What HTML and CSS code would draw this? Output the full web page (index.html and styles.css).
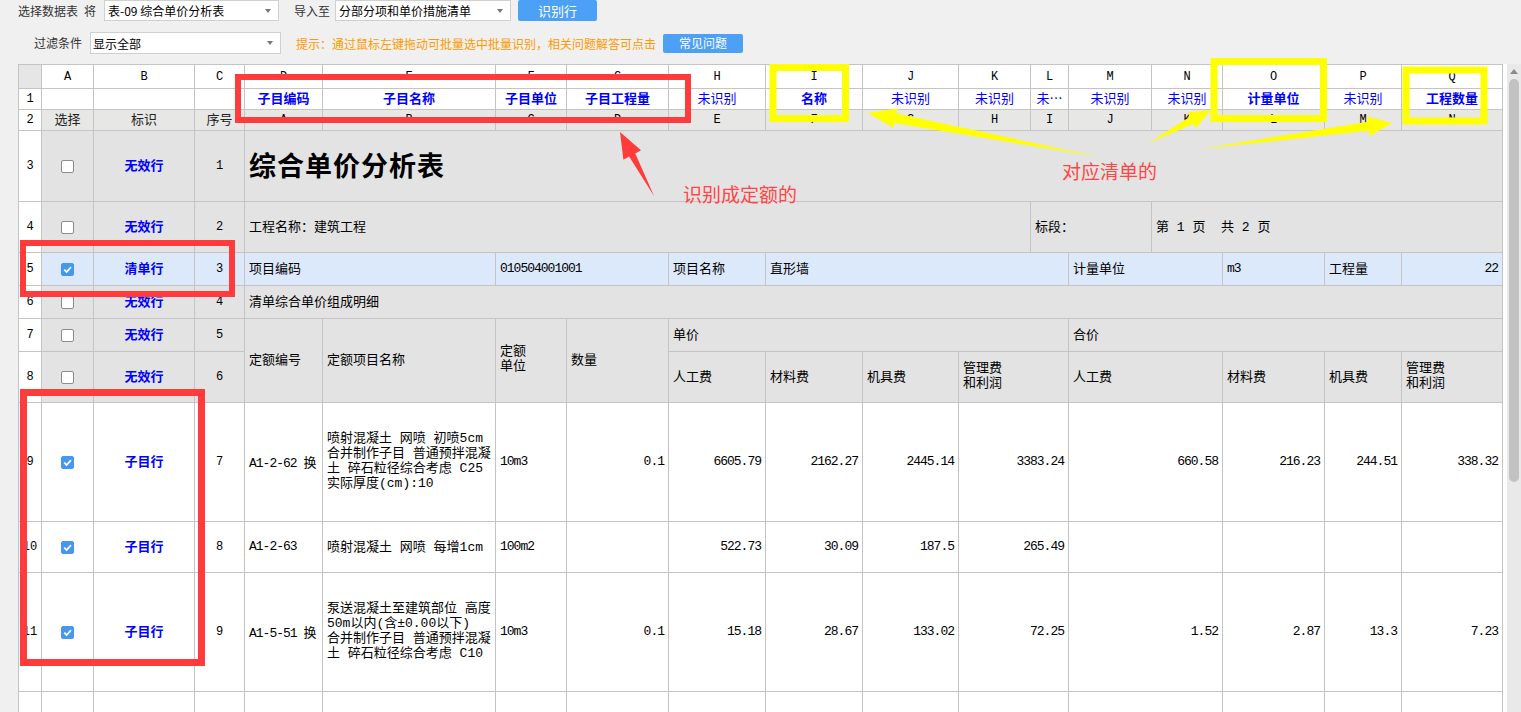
FILE: index.html
```html
<!DOCTYPE html>
<html lang="zh-CN">
<head>
<meta charset="utf-8">
<title>识别行</title>
<link rel="stylesheet" href="styles.css">
</head>
<body>
<div class="bar bar1">
  <span class="lbl">选择数据表</span>
  <span class="lbl jiang">将</span>
  <div class="select sel1"><span>表-09 综合单价分析表</span><svg class="caret" width="6" height="4" viewBox="0 0 6 4"><path d="M0 0H6L3 4Z"/></svg></div>
  <span class="lbl daoru">导入至</span>
  <div class="select sel2"><span>分部分项和单价措施清单</span><svg class="caret" width="6" height="4" viewBox="0 0 6 4"><path d="M0 0H6L3 4Z"/></svg></div>
  <button class="btn btn1">识别行</button>
</div>
<div class="bar bar2">
  <span class="lbl">过滤条件</span>
  <div class="select sel3"><span>显示全部</span><svg class="caret" width="6" height="4" viewBox="0 0 6 4"><path d="M0 0H6L3 4Z"/></svg></div>
  <span class="hint">提示：通过鼠标左键拖动可批量选中批量识别，相关问题解答可点击</span>
  <button class="btn btn2">常见问题</button>
</div>

<div class="gridwrap">
  <div class="sheet">
    <!-- column letters -->
    <div class="c corner"></div>
    <div class="c ctr col">A</div><div class="c ctr col">B</div><div class="c ctr col">C</div><div class="c ctr col">D</div><div class="c ctr col">E</div><div class="c ctr col">F</div><div class="c ctr col">G</div><div class="c ctr col">H</div><div class="c ctr col">I</div><div class="c ctr col">J</div><div class="c ctr col">K</div><div class="c ctr col">L</div><div class="c ctr col">M</div><div class="c ctr col">N</div><div class="c ctr col">O</div><div class="c ctr col">P</div><div class="c ctr col">Q</div>

    <!-- row 1 -->
    <div class="c ctr col">1</div><div class="c"></div><div class="c"></div><div class="c"></div>
    <div class="c ctr lab">子目编码</div><div class="c ctr lab">子目名称</div><div class="c ctr lab">子目单位</div><div class="c ctr lab">子目工程量</div>
    <div class="c ctr un">未识别</div><div class="c ctr lab">名称</div><div class="c ctr un">未识别</div><div class="c ctr un">未识别</div><div class="c ctr un">未…</div><div class="c ctr un">未识别</div><div class="c ctr un">未识别</div><div class="c ctr lab">计量单位</div><div class="c ctr un">未识别</div><div class="c ctr lab">工程数量</div>

    <!-- row 2 -->
    <div class="c ctr col">2</div><div class="c ctr h cn">选择</div><div class="c ctr h cn">标识</div><div class="c ctr h cn">序号</div>
    <div class="c ctr h col">A</div><div class="c ctr h col">B</div><div class="c ctr h col">C</div><div class="c ctr h col">D</div><div class="c ctr h col">E</div><div class="c ctr h col">F</div><div class="c ctr h col">G</div><div class="c ctr h col">H</div><div class="c ctr h col">I</div><div class="c ctr h col">J</div><div class="c ctr h col">K</div><div class="c ctr h col">L</div><div class="c ctr h col">M</div><div class="c ctr h col">N</div>

    <!-- row 3 -->
    <div class="c ctr col">3</div><div class="c ctr g box"><span class="cb"></span></div><div class="c ctr g lab">无效行</div><div class="c ctr g col">1</div>
    <div class="c g s14 title">综合单价分析表</div>

    <!-- row 4 -->
    <div class="c ctr col">4</div><div class="c ctr g box"><span class="cb"></span></div><div class="c ctr g lab">无效行</div><div class="c ctr g col">2</div>
    <div class="c g s8">工程名称：建筑工程</div><div class="c g s2">标段：</div><div class="c g s4">第 1 页&nbsp; 共 2 页</div>

    <!-- row 5 -->
    <div class="c ctr col">5</div><div class="c ctr sel box"><span class="cb on"><svg width="11" height="11" viewBox="0 0 11 11"><path d="M2.2 5.6L4.6 8L9 3.2" fill="none" stroke="#fff" stroke-width="1.8"/></svg></span></div><div class="c ctr sel lab">清单行</div><div class="c ctr sel col">3</div>
    <div class="c sel s2">项目编码</div><div class="c sel s2 num">010504001001</div><div class="c sel">项目名称</div><div class="c sel s4">直形墙</div><div class="c sel s2">计量单位</div><div class="c sel num">m3</div><div class="c sel">工程量</div><div class="c sel rt num">22</div>

    <!-- row 6 -->
    <div class="c ctr col">6</div><div class="c ctr g box"><span class="cb"></span></div><div class="c ctr g lab">无效行</div><div class="c ctr g col">4</div>
    <div class="c g s14">清单综合单价组成明细</div>

    <!-- row 7 -->
    <div class="c ctr col">7</div><div class="c ctr g box"><span class="cb"></span></div><div class="c ctr g lab">无效行</div><div class="c ctr g col">5</div>
    <div class="c g r2">定额编号</div><div class="c g r2">定额项目名称</div><div class="c g r2 ml"><div>定额<br>单位</div></div><div class="c g r2">数量</div>
    <div class="c g s5">单价</div><div class="c g s5">合价</div>

    <!-- row 8 -->
    <div class="c ctr col">8</div><div class="c ctr g box"><span class="cb"></span></div><div class="c ctr g lab">无效行</div><div class="c ctr g col">6</div>
    <div class="c g">人工费</div><div class="c g">材料费</div><div class="c g">机具费</div><div class="c g s2 ml"><div>管理费<br>和利润</div></div>
    <div class="c g s2">人工费</div><div class="c g">材料费</div><div class="c g">机具费</div><div class="c g ml"><div>管理费<br>和利润</div></div>

    <!-- row 9 -->
    <div class="c ctr col">9</div><div class="c ctr box"><span class="cb on"><svg width="11" height="11" viewBox="0 0 11 11"><path d="M2.2 5.6L4.6 8L9 3.2" fill="none" stroke="#fff" stroke-width="1.8"/></svg></span></div><div class="c ctr lab">子目行</div><div class="c ctr col">7</div>
    <div class="c num">A1-2-62 换</div>
    <div class="c ml"><div>喷射混凝土 网喷 初喷5cm<br>合并制作子目 普通预拌混凝<br>土 碎石粒径综合考虑 C25<br>实际厚度(cm):10</div></div>
    <div class="c num">10m3</div><div class="c rt num">0.1</div>
    <div class="c rt num">6605.79</div><div class="c rt num">2162.27</div><div class="c rt num">2445.14</div><div class="c rt num s2">3383.24</div>
    <div class="c rt num s2">660.58</div><div class="c rt num">216.23</div><div class="c rt num">244.51</div><div class="c rt num">338.32</div>

    <!-- row 10 -->
    <div class="c ctr col">10</div><div class="c ctr box"><span class="cb on"><svg width="11" height="11" viewBox="0 0 11 11"><path d="M2.2 5.6L4.6 8L9 3.2" fill="none" stroke="#fff" stroke-width="1.8"/></svg></span></div><div class="c ctr lab">子目行</div><div class="c ctr col">8</div>
    <div class="c num">A1-2-63</div>
    <div class="c">喷射混凝土 网喷 每增1cm</div>
    <div class="c num">100m2</div><div class="c"></div>
    <div class="c rt num">522.73</div><div class="c rt num">30.09</div><div class="c rt num">187.5</div><div class="c rt num s2">265.49</div>
    <div class="c s2"></div><div class="c"></div><div class="c"></div><div class="c"></div>

    <!-- row 11 -->
    <div class="c ctr col">11</div><div class="c ctr box"><span class="cb on"><svg width="11" height="11" viewBox="0 0 11 11"><path d="M2.2 5.6L4.6 8L9 3.2" fill="none" stroke="#fff" stroke-width="1.8"/></svg></span></div><div class="c ctr lab">子目行</div><div class="c ctr col">9</div>
    <div class="c num">A1-5-51 换</div>
    <div class="c ml"><div>泵送混凝土至建筑部位 高度<br>50m以内(含±0.00以下)<br>合并制作子目 普通预拌混凝<br>土 碎石粒径综合考虑 C10</div></div>
    <div class="c num">10m3</div><div class="c rt num">0.1</div>
    <div class="c rt num">15.18</div><div class="c rt num">28.67</div><div class="c rt num">133.02</div><div class="c rt num s2">72.25</div>
    <div class="c rt num s2">1.52</div><div class="c rt num">2.87</div><div class="c rt num">13.3</div><div class="c rt num">7.23</div>

    <!-- row 12 (mostly below the fold) -->
    <div class="c ctr col"></div><div class="c"></div><div class="c"></div><div class="c"></div>
    <div class="c"></div><div class="c"></div><div class="c"></div><div class="c"></div>
    <div class="c"></div><div class="c"></div><div class="c"></div><div class="c s2"></div>
    <div class="c s2"></div><div class="c"></div><div class="c"></div><div class="c"></div>
  </div>
  <div class="vscroll">
    <svg class="uparrow" width="8" height="5" viewBox="0 0 8 5"><path d="M0 5L4 0L8 5Z"/></svg>
    <div class="thumb"></div>
  </div>
</div>

<svg class="overlay" width="1521" height="712" viewBox="0 0 1521 712">
  <g fill="none" stroke="#ff3b3b" stroke-width="6">
    <rect x="238" y="77" width="450" height="43"/>
    <rect x="23" y="243" width="209" height="51"/>
    <rect x="23.5" y="392.5" width="178" height="270" stroke-width="7"/>
  </g>
  <g fill="none" stroke="#ffff00" stroke-width="7">
    <rect x="773" y="67.5" width="72.5" height="51"/>
    <rect x="1214" y="61.5" width="109.5" height="57"/>
    <rect x="1406" y="70" width="78" height="51"/>
  </g>
  <g fill="#ffff00">
    <polygon points="868,113 897.4,108.4 896.6,113.5 1099,157 894.4,122.9 893.6,128"/>
    <polygon points="1211,110 1187.4,112.4 1189.8,116.8 1149,143 1193.4,123.8 1195.8,128.2"/>
    <polygon points="1392,123 1366.9,116.3 1367.6,121.7 1201,149 1368.8,130.7 1369.6,136.1"/>
  </g>
  <polygon fill="#ff3b3b" points="620,132 641,150.3 635.3,153.4 654,196 629.1,156.6 623.4,159.7"/>
</svg>
<div class="note n1">识别成定额的</div>
<div class="note n2">对应清单的</div>
</body>
</html>
```

FILE: styles.css
```css
* { box-sizing: border-box; }
html, body { margin: 0; }
body {
  width: 1521px;
  height: 712px;
  overflow: hidden;
  position: relative;
  background: #f0f0f0;
  font-family: "Noto Sans CJK SC", "Liberation Sans", sans-serif;
  font-size: 12px;
  color: #333;
}

/* toolbar */
.bar { display: flex; align-items: center; }
.bar1 { height: 21px; padding-left: 18px; }
.bar2 { height: 22px; margin-top: 11px; padding-left: 34px; }
.lbl { white-space: nowrap; line-height: 1; }
.jiang { margin-left: 6px; }
.daoru { margin-left: 15px; }
.select {
  display: flex;
  align-items: center;
  justify-content: space-between;
  height: 100%;
  background: #fff;
  border: 1px solid #d0d0d0;
  padding: 0 7px 0 3px;
  color: #000;
  font-size: 12px;
  white-space: nowrap;
}
.caret { fill: #777; }
.sel1 { margin-left: 8px; width: 175px; }
.sel2 { margin-left: 5px; width: 176px; }
.sel3 { margin-left: 8px; width: 191px; padding-left: 2px; }
.btn {
  border: none;
  border-radius: 2px;
  background: #4ca0f5;
  color: #fff;
  font-family: "Noto Sans CJK SC", sans-serif;
  font-size: 13px;
  padding: 0;
  line-height: 1;
}
.btn1 { margin-left: 7px; width: 79px; height: 21px; }
.btn2 { margin-left: 7px; width: 80px; height: 19px; font-size: 12px; }
.hint { margin-left: 15px; color: #ff9a00; white-space: nowrap; }

/* grid */
.gridwrap {
  display: flex;
  align-items: flex-start;
  margin: 10px 0 0 18px;
  height: 648px;
  background: #fff;
}
.sheet {
  display: grid;
  grid-template-columns: 22px 51px 100px 49px 77px 172px 70px 101px 96px 96px 95px 71px 37px 82px 70px 101px 76px 100px;
  grid-template-rows: 23px 20px 20px 70px 50px 32px 32px 32px 50px 118px 50px 118px 118px;
  gap: 1px;
  padding: 1px;
  background: #c4c4c4;
  width: 1485px;
  flex: none;
}
.c {
  display: flex;
  align-items: center;
  padding: 0 4px 4px;
  background: #fff;
  overflow: hidden;
  white-space: nowrap;
  font-family: "Liberation Mono", "Noto Sans CJK SC", monospace;
  font-size: 13px;
  color: #000;
}
.ctr { justify-content: center; padding-left: 0; padding-right: 0; }
.rt { justify-content: flex-end; }
.corner { background: #e6e6e6; }
.col { font-family: "Liberation Mono", monospace; font-size: 12px; padding-bottom: 0; }
.num { letter-spacing: -1px; padding-bottom: 1px; }
.box { padding-bottom: 0; }
.cn { font-family: "Noto Sans CJK SC", sans-serif; color: #222; }
.h { background: #e7e7e5; }
.g { background: #e3e3e3; }
.sel { background: #dce9fb; }
.lab {
  font-family: "Noto Sans CJK SC", sans-serif;
  font-weight: bold;
  color: #0000ff;
  font-size: 13px;
}
.un {
  font-family: "Noto Sans CJK SC", sans-serif;
  color: #0000ff;
  font-size: 13px;
}
.ml { white-space: nowrap; line-height: 15px; padding-bottom: 3px; }
.title {
  font-family: "Noto Sans CJK SC", serif;
  font-size: 27px;
  font-weight: bold;
  letter-spacing: 1px;
  padding-bottom: 3px;
}
.s2 { grid-column: span 2; }
.s4 { grid-column: span 4; }
.s5 { grid-column: span 5; }
.s8 { grid-column: span 8; }
.s14 { grid-column: span 14; }
.r2 { grid-row: span 2; }

.cb {
  display: block;
  width: 13px;
  height: 13px;
  border: 1px solid #8c8c8c;
  border-radius: 2px;
  background: #fff;
}
.cb.on {
  background: #4597ef;
  border-color: #4597ef;
}
.cb svg { display: block; }

/* scrollbar */
.vscroll {
  flex: none;
  margin-left: 4px;
  width: 14px;
  height: 648px;
  background: #e9e9e9;
  display: flex;
  flex-direction: column;
  align-items: center;
}
.uparrow { fill: #8a8a8a; margin-top: 5px; }
.thumb {
  margin-top: 5px;
  width: 10px;
  height: 403px;
  border-radius: 5px;
  background: #c2c2c2;
}

/* annotations overlay */
.overlay {
  position: absolute;
  left: 0;
  top: 0;
  pointer-events: none;
}
.note {
  position: absolute;
  font-family: "Noto Sans CJK SC", sans-serif;
  font-size: 19px;
  line-height: 19px;
  color: #ff4646;
  white-space: nowrap;
}
.n1 { left: 683px; top: 184px; }
.n2 { left: 1062px; top: 161px; }
```
